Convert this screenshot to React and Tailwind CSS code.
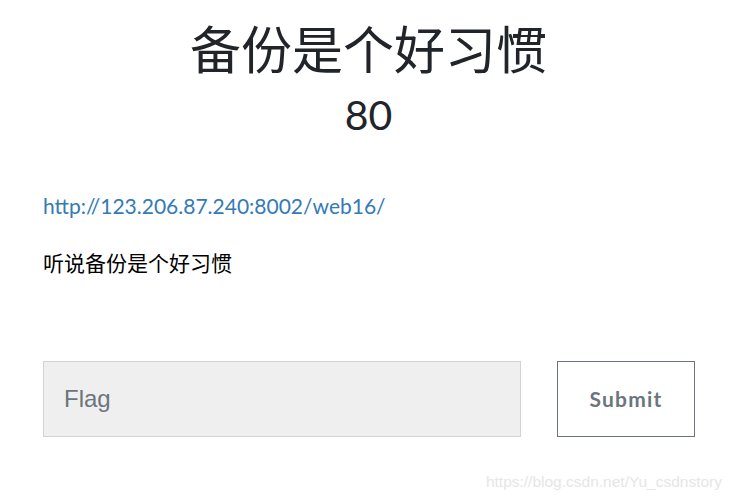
import React from "react";

export default function App() {
  return (
    <div className="relative w-[732px] h-[500px] bg-white overflow-hidden font-['Lato','Noto_Sans_CJK_SC',sans-serif] text-[#212529]">
      <div className="pl-[43px] pr-[38px] pt-[18px]">
        {/* challenge header */}
        <div className="flex flex-col items-center">
          <h1 className="text-[51px] leading-[64px]">备份是个好习惯</h1>
          <h2 className="mt-[5px] text-[41px] leading-[56px]">80</h2>
        </div>

        <div className="mt-[47px] text-[21px]">
          <a href="#" className="text-[#337ab7] leading-[28px]">
            http://123.206.87.240:8002/web16/
          </a>
          <p className="mt-[27px] leading-[28px] text-black">听说备份是个好习惯</p>
        </div>

        {/* flag form */}
        <div className="mt-[84px] flex gap-[36px]">
          <input
            placeholder="Flag"
            className="w-[478px] shrink-0 h-[76px] bg-[#efefef] border border-[#ced4da] px-[20px] text-[24px] font-['Liberation_Sans',sans-serif] placeholder:text-[#6c757d] outline-none"
          />
          <button className="w-[138px] shrink-0 h-[76px] border border-[#6c757d] text-[#6c757d] font-bold text-[21px] tracking-[1.2px]">
            Submit
          </button>
        </div>
      </div>

      {/* watermark */}
      <div className="absolute right-[10px] bottom-[7px] text-[15.5px] text-[#e6e6e6] font-['Liberation_Sans',sans-serif]">
        https://blog.csdn.net/Yu_csdnstory
      </div>
    </div>
  );
}
